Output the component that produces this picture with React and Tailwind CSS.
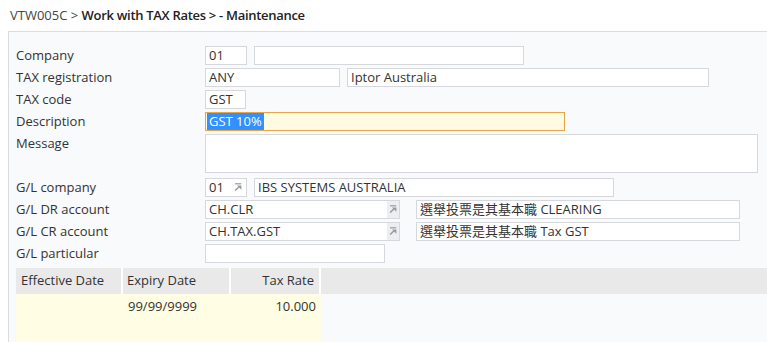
import React from 'react';

const font = { fontFamily: '"Open Sans", "Noto Sans CJK TC", sans-serif' };

function LookupArrow() {
  return (
    <svg width="8" height="8" viewBox="0 0 8 8" className="shrink-0">
      <path d="M1 0.8h6.2" stroke="#9a9a9a" strokeWidth="1.2" />
      <path d="M3 2.4h4.4v4.4z" fill="#9a9a9a" />
      <path d="M1.2 7.6l3.8-3.8" stroke="#9a9a9a" strokeWidth="1.4" />
    </svg>
  );
}

function Box({ w, children, arrow, shaded, className = '' }) {
  return (
    <div
      className={`h-[19px] border border-[#d6d8db] bg-white flex items-center pl-[3px] text-[13px] text-[#333] overflow-hidden whitespace-nowrap ${className}`}
      style={{ width: w }}
    >
      <span className="flex-1 leading-none">{children}</span>
      {arrow && (
        <span className={`h-full flex items-center justify-center ${shaded ? 'w-[12px] bg-[#eceef1]' : 'w-[12px] mr-[2px]'}`}>
          <LookupArrow />
        </span>
      )}
    </div>
  );
}

function Row({ label, children, top }) {
  return (
    <div className={`flex ${top ? 'items-start' : 'items-center'} h-[22px]`}>
      <div className="w-[189px] shrink-0 text-[13px] text-[#333] leading-[22px]">{label}</div>
      <div className="flex items-center">{children}</div>
    </div>
  );
}

export default function App() {
  return (
    <div className="w-[767px] h-[342px] bg-white overflow-hidden" style={font}>
      {/* Title */}
      <div className="h-[31px] pl-[10px] flex items-center text-[13px] text-[#333]">
        <span className="font-normal text-[#444]">VTW005C &gt;&nbsp;</span>
        <span className="font-semibold text-[#222] tracking-[-0.3px]">Work with TAX Rates &gt; - Maintenance</span>
      </div>

      {/* Panel */}
      <div className="ml-[8px] border-l border-t border-[#dcdde0] bg-[#f9fafb] h-[311px] pl-[7px] pt-[12px]">
        <Row label="Company">
          <Box w={42}>01</Box>
          <Box w={270} className="ml-[7px]" />
        </Row>
        <Row label="TAX registration">
          <Box w={135}>ANY</Box>
          <Box w={362} className="ml-[7px]">Iptor Australia</Box>
        </Row>
        <Row label="TAX code">
          <Box w={41}>GST</Box>
        </Row>
        <Row label="Description">
          <div className="h-[19px] w-[360px] border border-[#eaa448] bg-[#fffbe2] flex items-center pl-[1px] text-[13px]">
            <span className="bg-[#3390ff] text-white h-[17px] leading-[17px] px-[2px]">GST 10%</span>
          </div>
        </Row>
        <div className="flex items-start h-[44px]">
          <div className="w-[189px] shrink-0 text-[13px] text-[#333] leading-[22px]">Message</div>
          <div className="mt-[2px] w-[553px] h-[39px] border border-[#d6d8db] bg-white" />
        </div>
        <Row label="G/L company">
          <Box w={42} arrow>01</Box>
          <Box w={360} className="ml-[7px]">IBS SYSTEMS AUSTRALIA</Box>
        </Row>
        <Row label="G/L DR account">
          <Box w={195} arrow shaded>CH.CLR</Box>
          <Box w={324} className="ml-[16px]">選舉投票是其基本職 CLEARING</Box>
        </Row>
        <Row label="G/L CR account">
          <Box w={195} arrow shaded>CH.TAX.GST</Box>
          <Box w={324} className="ml-[16px]">選舉投票是其基本職 Tax GST</Box>
        </Row>
        <Row label="G/L particular">
          <Box w={180} />
        </Row>

        {/* Grid */}
        <div className="mt-[4px]">
          <div className="flex h-[26px] bg-[#e9e9ea] text-[13px] text-[#333]">
            <div className="w-[107px] pl-[5px] flex items-center border-r-2 border-white">Effective Date</div>
            <div className="w-[108px] pl-[4px] flex items-center border-r-2 border-white">Expiry Date</div>
            <div className="w-[90px] pr-[5px] flex items-center justify-end border-r-2 border-white">Tax Rate</div>
            <div className="flex-1" />
          </div>
          <div className="flex h-[60px] text-[13px] text-[#333]">
            <div className="w-[305px] bg-[#fffde3] flex">
              <div className="w-[107px]" />
              <div className="w-[108px] pl-[5px] pt-[3px]">99/99/9999</div>
              <div className="w-[90px] pr-[5px] pt-[3px] text-right">10.000</div>
            </div>
          </div>
        </div>
      </div>
    </div>
  );
}
